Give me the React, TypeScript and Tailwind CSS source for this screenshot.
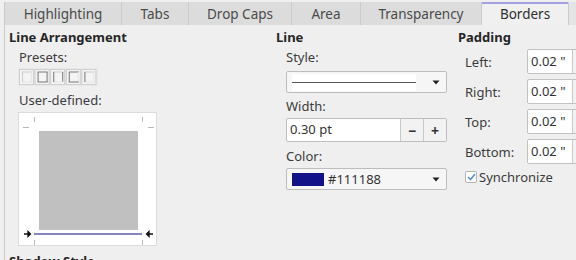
import React from "react";

const font = { fontFamily: '"Noto Sans", "Open Sans", sans-serif' };

function Tab({ label, w, selected }: { label: string; w: string; selected?: boolean }) {
  return (
    <div
      className={`${w} h-[23px] flex items-center justify-center border-r border-[#cbcbcb] relative text-[13.5px] ${
        selected ? "bg-[#f0f0f0] text-[#2e2e2e]" : "bg-[#dcdcdc] text-[#4a4a4a]"
      }`}
    >
      {selected && <div className="absolute left-0 right-0 top-0 h-[2px] bg-[#a3a1e4]" />}
      <span className="leading-[20px]">{label}</span>
    </div>
  );
}

function Arrow() {
  return (
    <svg width="8" height="5" viewBox="0 0 8 5">
      <path d="M0.5 0.5 H7.5 L4 4.5 Z" fill="#222" />
    </svg>
  );
}

function Presets() {
  const dark = "#8a8a8a";
  const light = "#d2d2d2";
  const icons: [boolean, boolean, boolean, boolean][] = [
    [false, false, false, false],
    [true, true, true, true],
    [false, true, false, true],
    [true, false, true, true],
    [false, false, false, true],
  ];
  return (
    <svg width="80" height="18" viewBox="0 0 80 18">
      <rect x="0.5" y="0.5" width="79" height="17" fill="#e4e4e4" />
      {icons.map((b, i) => {
        const x = 1 + i * 15.6;
        return (
          <g key={i}>
            <rect x={x + 0.5} y={1.5} width={14} height={15} fill="#f4f4f4" stroke="#cfcfcf" />
            <line x1={x + 3} y1={4} x2={x + 13} y2={4} stroke={b[0] ? dark : light} strokeWidth={1.2} />
            <line x1={x + 12.5} y1={4} x2={x + 12.5} y2={14} stroke={b[1] ? dark : "#e6e6e6"} strokeWidth={1.2} />
            <line x1={x + 3} y1={14} x2={x + 13} y2={14} stroke={b[2] ? dark : "#e6e6e6"} strokeWidth={1.2} />
            <line x1={x + 3.5} y1={4} x2={x + 3.5} y2={14} stroke={b[3] ? dark : light} strokeWidth={1.2} />
          </g>
        );
      })}
    </svg>
  );
}

function Canvas() {
  const tick = "#b8b8b8";
  return (
    <svg width="139" height="134" viewBox="0 0 139 134" className="block">
      <rect x="20" y="18" width="99" height="99" fill="#c0c0c0" />
      <line x1="15.5" y1="4" x2="15.5" y2="9" stroke={tick} />
      <line x1="123.5" y1="4" x2="123.5" y2="9" stroke={tick} />
      <line x1="4" y1="14.5" x2="10" y2="14.5" stroke={tick} />
      <line x1="129" y1="14.5" x2="135" y2="14.5" stroke={tick} />
      <line x1="15.5" y1="127" x2="15.5" y2="132" stroke={tick} />
      <line x1="123.5" y1="127" x2="123.5" y2="132" stroke={tick} />
      <rect x="15" y="120" width="108" height="2" fill="#8584c4" />
      <path d="M5 121 H9 M9 118.5 L11.5 121 L9 123.5 Z" stroke="#111" strokeWidth="1.3" fill="#111" />
      <path d="M134 121 H130 M130 118.5 L127.5 121 L130 123.5 Z" stroke="#111" strokeWidth="1.3" fill="#111" />
    </svg>
  );
}

function PadRow({ label }: { label: string }) {
  return (
    <div className="flex items-center h-[25px]">
      <div className="w-[69px] shrink-0 pl-[7px] text-[13px] text-[#3c3c3c] leading-[20px]">{label}</div>
      <div className="flex shrink-0 h-[25px] w-[60px] border border-[#c2c2c2] rounded-[2px] bg-white overflow-hidden">
        <div className="w-[45px] h-full pl-[3px] flex items-center text-[13px] text-[#333] border-r border-[#c8c8c8]">
          0.02 "
        </div>
        <div className="flex-1 bg-[#f2f2f2]" />
      </div>
    </div>
  );
}

export default function App() {
  return (
    <div className="w-[576px] h-[260px] bg-[#efefef] overflow-hidden" style={font}>
      <div className="h-[2px]" />
      <div className="flex pl-[4px]">
        <div className="flex border-l border-[#c8c8c8]">
          <Tab label="Highlighting" w="w-[117px]" />
          <Tab label="Tabs" w="w-[67px]" />
          <Tab label="Drop Caps" w="w-[103px]" />
          <Tab label="Area" w="w-[69px]" />
          <Tab label="Transparency" w="w-[121px]" />
          <Tab label="Borders" w="w-[87px]" selected />
        </div>
        <div className="flex-1 bg-[#e4e4e4]" />
      </div>
      <div className="ml-[4px] border-l border-[#cacaca] h-[235px] flex">
        {/* Left column */}
        <div className="w-[271px] shrink-0 pl-[4px] pt-[2px] flex flex-col">
          <div className="h-[20px] leading-[20px] text-[13px] font-bold text-[#262626]">Line Arrangement</div>
          <div className="h-[20px] leading-[20px] text-[13px] text-[#3c3c3c] pl-[10px]">Presets:</div>
          <div className="pl-[9px] mt-[1px] h-[18px]">
            <Presets />
          </div>
          <div className="h-[20px] leading-[20px] text-[13px] text-[#3c3c3c] pl-[10px] mt-[4px]">User-defined:</div>
          <div className="ml-[9px] mt-[2px] w-[139px] h-[134px] bg-white border border-[#dcdcdc]">
            <Canvas />
          </div>
          <div className="h-[20px] leading-[20px] text-[13px] font-bold text-[#262626] mt-[5px]">Shadow Style</div>
        </div>
        {/* Middle column */}
        <div className="w-[182px] shrink-0 pt-[2px] flex flex-col">
          <div className="h-[20px] leading-[20px] text-[13px] font-bold text-[#262626]">Line</div>
          <div className="h-[20px] leading-[20px] text-[13px] text-[#3c3c3c] pl-[10px]">Style:</div>
          <div className="ml-[10px] mt-[4px] w-[161px] h-[22px] border border-[#bdbdbd] rounded-[2px] bg-[#f6f6f6] flex items-center pl-[5px] pr-[6px]">
            <div className="w-[124px] h-[17px] bg-white flex items-center">
              <div className="w-full h-[1px] bg-[#555]" />
            </div>
            <div className="flex-1" />
            <Arrow />
          </div>
          <div className="h-[20px] leading-[20px] text-[13px] text-[#3c3c3c] pl-[10px] mt-[3px]">Width:</div>
          <div className="ml-[10px] mt-[2px] w-[161px] h-[24px] border border-[#bdbdbd] rounded-[2px] bg-white flex overflow-hidden">
            <div className="flex-1 pl-[3px] flex items-center text-[13px] text-[#333]">0.30 pt</div>
            <div className="w-[23px] h-full bg-[#f2f2f2] border-l border-[#c8c8c8] flex items-center justify-center text-[14px] font-bold text-[#333]">
              −
            </div>
            <div className="w-[23px] h-full bg-[#f2f2f2] border-l border-[#c8c8c8] flex items-center justify-center text-[14px] font-bold text-[#333]">
              +
            </div>
          </div>
          <div className="h-[20px] leading-[20px] text-[13px] text-[#3c3c3c] pl-[10px] mt-[4px]">Color:</div>
          <div className="ml-[10px] mt-[2px] w-[161px] h-[22px] border border-[#bdbdbd] rounded-[2px] bg-[#f6f6f6] flex items-center pl-[5px] pr-[6px]">
            <div className="w-[32px] h-[13px] bg-[#111188]" />
            <span className="ml-[4px] text-[13px] text-[#333] leading-[20px]">#111188</span>
            <div className="flex-1" />
            <Arrow />
          </div>
        </div>
        {/* Right column */}
        <div className="w-[160px] shrink-0 pt-[2px] flex flex-col">
          <div className="h-[20px] leading-[20px] text-[13px] font-bold text-[#262626]">Padding</div>
          <div className="mt-[2px] flex flex-col gap-[5px]">
            <PadRow label="Left:" />
            <PadRow label="Right:" />
            <PadRow label="Top:" />
            <PadRow label="Bottom:" />
          </div>
          <div className="flex items-center mt-[7px] pl-[7px] h-[12px]">
            <div className="w-[12px] h-[12px] border border-[#b4b4b4] rounded-[2px] bg-white flex items-center justify-center">
              <svg width="9" height="8" viewBox="0 0 9 8">
                <path d="M1 4 L3.5 6.5 L8 1" stroke="#5a8fd0" strokeWidth="1.6" fill="none" />
              </svg>
            </div>
            <span className="ml-[2px] text-[13px] text-[#3c3c3c] leading-[20px]">Synchronize</span>
          </div>
        </div>
      </div>
    </div>
  );
}
